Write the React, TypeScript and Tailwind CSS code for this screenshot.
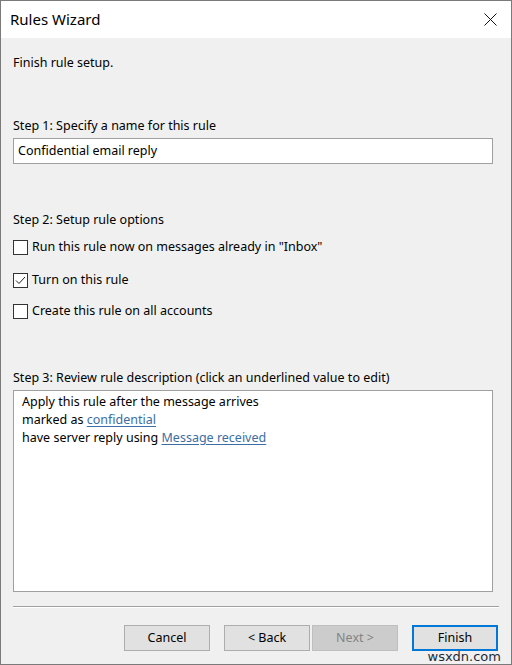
import React from "react";

const font = { fontFamily: '"Noto Sans", "Segoe UI", Arial, sans-serif' };

function CloseIcon() {
  return (
    <svg width="13" height="13" viewBox="0 0 13 13" className="block">
      <path d="M0.5 0.5 L12.5 12.5 M12.5 0.5 L0.5 12.5" stroke="#111" strokeWidth="1" fill="none" />
    </svg>
  );
}

function Checkbox({ checked, label, className }: { checked?: boolean; label: string; className?: string }) {
  return (
    <div className={`flex items-center h-[18px] ${className ?? ""}`}>
      <div className="w-[15px] h-[15px] border border-[#333333] bg-white flex items-center justify-center shrink-0">
        {checked && (
          <svg width="11" height="9" viewBox="0 0 11 9" className="block">
            <path d="M1 4.5 L4 7.5 L10 1" stroke="#222" strokeWidth="1" fill="none" />
          </svg>
        )}
      </div>
      <span className="ml-[4px] text-[12.5px] leading-[18px] text-black">{label}</span>
    </div>
  );
}

function Button({ label, disabled, primary, className }: { label: string; disabled?: boolean; primary?: boolean; className?: string }) {
  const base = "w-[86px] h-[26px] flex items-center justify-center text-[12.5px] shrink-0";
  let look = "bg-[#e1e1e1] border border-[#adadad] text-black";
  if (disabled) look = "bg-[#cccccc] border border-[#bfbfbf] text-[#838383]";
  if (primary) look = "bg-[#e1e1e1] border-2 border-[#0078d7] text-black";
  return <div className={`${base} ${look} ${className ?? ""}`}>{label}</div>;
}

export default function App() {
  return (
    <div style={font} className="relative w-[512px] h-[665px] border border-[#7a7a7a] bg-[#f0f0f0] flex flex-col overflow-hidden">
      {/* title bar */}
      <div className="h-[37px] bg-white flex items-center justify-between pl-[9px] pr-[14px] shrink-0">
        <span className="text-[15px] text-black leading-none">Rules Wizard</span>
        <CloseIcon />
      </div>

      <div className="flex flex-col pl-[12px] pr-[12px] pt-[16px] flex-1 text-[12.5px]">
        <div className="leading-[18px] text-black">Finish rule setup.</div>

        <div className="mt-[45px] leading-[18px] text-black">Step 1: Specify a name for this rule</div>
        <div className="mt-[3px] w-[480px] h-[26px] border border-[#a0a0a0] bg-white flex items-center px-[4px] text-black">
          Confidential email reply
        </div>

        <div className="mt-[47px] leading-[18px] text-black">Step 2: Setup rule options</div>
        <div className="mt-[9px] flex flex-col">
          <Checkbox label={'Run this rule now on messages already in "Inbox"'} />
          <Checkbox checked label="Turn on this rule" className="mt-[15px]" />
          <Checkbox label="Create this rule on all accounts" className="mt-[13px]" />
        </div>

        <div className="mt-[49px] leading-[18px] text-black">
          Step 3: Review rule description (click an underlined value to edit)
        </div>
        <div className="mt-[3px] w-[480px] h-[202px] border border-[#a0a0a0] bg-white pt-[2px] pl-[8px] leading-[18px] text-black">
          <div>Apply this rule after the message arrives</div>
          <div>
            marked as <span className="text-[#3a6ea5] underline underline-offset-2">confidential</span>
          </div>
          <div>
            have server reply using <span className="text-[#3a6ea5] underline underline-offset-2">Message received</span>
          </div>
        </div>

        <div className="mt-[14px] w-[486px] h-[2px] border-t border-[#a0a0a0] border-b border-b-white" />

        <div className="mt-[17px] flex justify-end pr-[1px]">
          <Button label="Cancel" className="mr-[14px]" />
          <Button label="< Back" className="mr-[2px]" />
          <Button label="Next >" disabled className="mr-[14px]" />
          <Button label="Finish" primary />
        </div>
      </div>

      <span className="absolute right-[10px] bottom-[1px] text-[13px] leading-[13px] text-[#1c2b3a]" style={{ fontFamily: '"DejaVu Sans", sans-serif' }}>
        wsxdn.com
      </span>
    </div>
  );
}
